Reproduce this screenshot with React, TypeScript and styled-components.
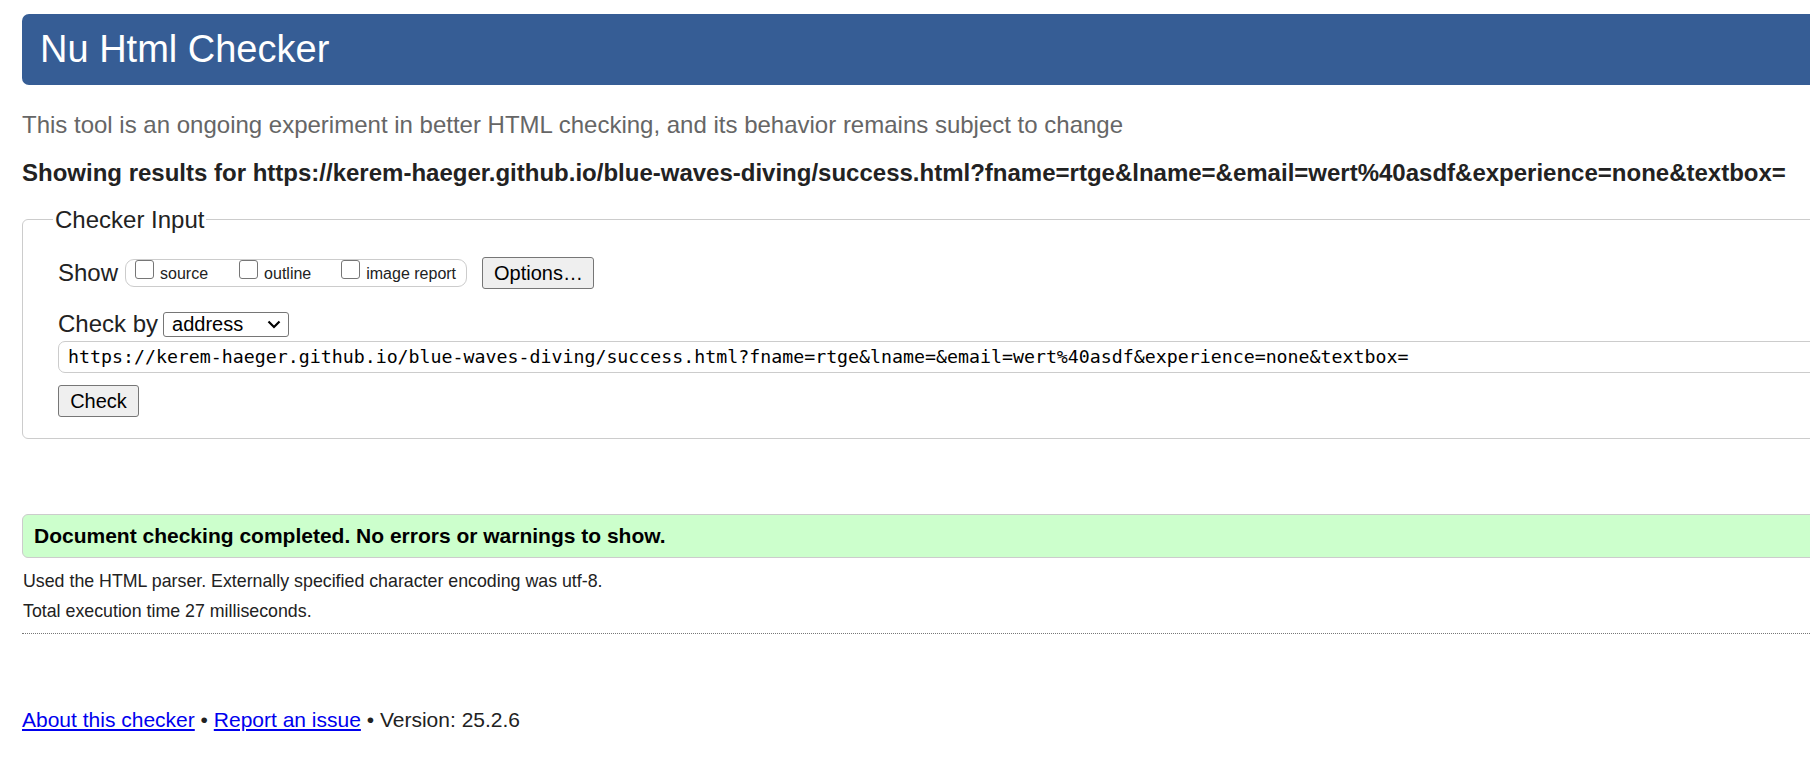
import React from "react";
import styled, { createGlobalStyle } from "styled-components";

const GlobalStyle = createGlobalStyle`
  html, body {
    margin: 0;
    padding: 0;
    overflow: hidden;
    background: #ffffff;
  }
  body {
    font-family: "Liberation Sans", Arial, sans-serif;
    color: #222222;
  }
`;

const Page = styled.div`
  width: 2100px;
  padding: 14px 0 0 22px;
  box-sizing: border-box;
`;

const Banner = styled.h1`
  margin: 0;
  height: 71px;
  padding-left: 18px;
  background: #365d95;
  color: #ffffff;
  border-radius: 7px;
  font-size: 38px;
  font-weight: 400;
  line-height: 71px;
`;

const Tagline = styled.p`
  margin: 25px 0 0;
  font-size: 24px;
  line-height: 30px;
  color: #666666;
`;

const ResultsFor = styled.p`
  margin: 18px 0 0;
  font-size: 24px;
  font-weight: 700;
  line-height: 30px;
  color: #222222;
`;

const InputSet = styled.fieldset`
  margin: 18px 0 0;
  padding: 10px 0 21px 35px;
  border: 1px solid #cccccc;
  border-radius: 6px;
  display: flex;
  flex-direction: column;
  align-items: flex-start;
`;

const Legend = styled.legend`
  margin-left: -5px;
  padding: 0 2px;
  font-size: 24px;
  line-height: 27px;
  color: #222222;
`;

const Row = styled.div<{ $top: number }>`
  display: flex;
  align-items: center;
  margin-top: ${(p) => p.$top}px;
`;

const FieldLabel = styled.span`
  font-size: 24px;
  line-height: 28px;
  color: #222222;
`;

const ChoiceGroup = styled.div`
  display: flex;
  align-items: flex-start;
  height: 28px;
  box-sizing: border-box;
  margin-left: 7px;
  padding: 0 10px 0 9px;
  border: 1px solid #cccccc;
  border-radius: 9px;
`;

const Choice = styled.label<{ $gap?: number }>`
  display: block;
  margin-left: ${(p) => p.$gap ?? 0}px;
  font-size: 16px;
  line-height: 20px;
  color: #222222;
  white-space: nowrap;
`;

const Box = styled.span`
  display: inline-block;
  vertical-align: baseline;
  width: 17px;
  height: 17px;
  margin-right: 6px;
  border: 1.5px solid #767676;
  border-radius: 3px;
  background: #ffffff;
`;

const Button = styled.button`
  height: 32px;
  box-sizing: border-box;
  padding: 0 11px;
  border: 1px solid #767676;
  border-radius: 3px;
  background: #efefef;
  font-family: "Liberation Sans", Arial, sans-serif;
  font-size: 20px;
  color: #000000;
  line-height: 28px;
`;

const OptionsButton = styled(Button)`
  margin-left: 15px;
  width: 112px;
`;

const SelectBox = styled.div`
  display: flex;
  align-items: center;
  justify-content: space-between;
  width: 126px;
  height: 25px;
  box-sizing: border-box;
  margin-left: 5px;
  padding: 0 7px 0 8px;
  border: 1px solid #767676;
  border-radius: 3px;
  font-size: 20px;
  color: #000000;
`;

const UrlField = styled.div`
  width: 2200px;
  height: 32px;
  box-sizing: border-box;
  margin-top: 3px;
  padding-left: 9px;
  border: 1px solid #cccccc;
  border-radius: 7px;
  font-family: "DejaVu Sans Mono", "Liberation Mono", monospace;
  font-size: 18.25px;
  line-height: 30px;
  color: #000000;
  white-space: nowrap;
`;

const CheckButton = styled(Button)`
  margin-top: 12px;
  width: 81px;
`;

const Success = styled.div`
  margin-top: 75px;
  height: 44px;
  box-sizing: border-box;
  padding-left: 11px;
  background: #ccffcc;
  border: 1px solid #cccccc;
  border-radius: 6px;
  font-size: 21px;
  font-weight: 700;
  line-height: 42px;
  color: #000000;
`;

const Detail = styled.p<{ $top: number }>`
  margin: ${(p) => p.$top}px 0 0 1px;
  font-size: 17.8px;
  line-height: 24px;
  color: #222222;
`;

const Rule = styled.hr`
  margin: 10px 0 0;
  border: 0;
  border-top: 1px dotted #777777;
  height: 0;
`;

const Footer = styled.p`
  margin: 73px 0 0;
  font-size: 21px;
  line-height: 26px;
  color: #222222;
`;

const Link = styled.a`
  color: #0000ee;
  text-decoration: underline;
  text-underline-offset: 2px;
`;

const Chevron = () => (
  <svg width="14" height="9" viewBox="0 0 14 9" aria-hidden="true">
    <path d="M1.5 1.5 L7 7 L12.5 1.5" fill="none" stroke="#000" strokeWidth="2.2" />
  </svg>
);

export default function App() {
  const url =
    "https://kerem-haeger.github.io/blue-waves-diving/success.html?fname=rtge&lname=&email=wert%40asdf&experience=none&textbox=";
  return (
    <>
      <GlobalStyle />
      <Page>
        <Banner>Nu Html Checker</Banner>
        <Tagline>
          This tool is an ongoing experiment in better HTML checking, and its behavior remains subject to change
        </Tagline>
        <ResultsFor>Showing results for {url}</ResultsFor>
        <InputSet>
          <Legend>Checker Input</Legend>
          <Row $top={14}>
            <FieldLabel>Show</FieldLabel>
            <ChoiceGroup>
              <Choice>
                <Box />
                source
              </Choice>
              <Choice $gap={31}>
                <Box />
                outline
              </Choice>
              <Choice $gap={30}>
                <Box />
                image report
              </Choice>
            </ChoiceGroup>
            <OptionsButton>Options…</OptionsButton>
          </Row>
          <Row $top={21}>
            <FieldLabel>Check by</FieldLabel>
            <SelectBox>
              <span>address</span>
              <Chevron />
            </SelectBox>
          </Row>
          <UrlField>{url}</UrlField>
          <CheckButton>Check</CheckButton>
        </InputSet>
        <Success>Document checking completed. No errors or warnings to show.</Success>
        <Detail $top={11}>Used the HTML parser. Externally specified character encoding was utf-8.</Detail>
        <Detail $top={6}>Total execution time 27 milliseconds.</Detail>
        <Rule />
        <Footer>
          <Link href="#about">About this checker</Link> • <Link href="#issue">Report an issue</Link> • Version: 25.2.6
        </Footer>
      </Page>
    </>
  );
}
